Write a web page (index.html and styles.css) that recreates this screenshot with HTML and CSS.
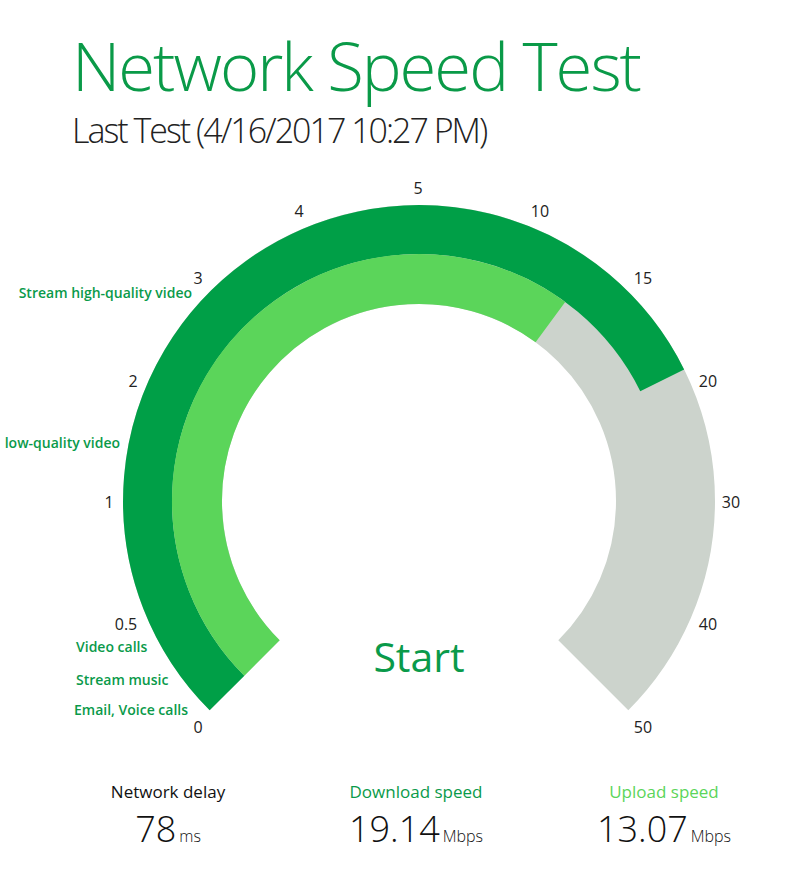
FILE: index.html
```html
<!DOCTYPE html>
<html lang="en">

<head>
    <meta charset="UTF-8">
    <meta name="viewport" content="width=device-width, initial-scale=1.0">
    <title>Network Speed Test</title>
    <link rel="stylesheet" href="styles.css">
</head>

<body>
    <div class="wrapper">
        <header>
            <h1 class="title">Network Speed Test</h1>
            <p class="last-test">Last Test (4/16/2017 10:27 PM)</p>
        </header>
        <main>
            <section class="gauge">
                <svg class="gauge-svg" width="800" height="590" viewBox="0 170 800 590">
                    <!-- rings: empty track, download (outer), upload (inner) -->
                    <path class="ring-track" d="M244.7 675.3 A246.5 246.5 0 1 1 593.3 675.3" />
                    <path class="ring-download" d="M227.0 693.0 A271.5 271.5 0 1 1 662.2 380.3" />
                    <path class="ring-upload" d="M262.0 658.0 A222 222 0 0 1 550.4 322.1" />

                    <g class="ticks">
                        <text x="198" y="727">0</text>
                        <text x="126" y="624">0.5</text>
                        <text x="109" y="502">1</text>
                        <text x="133" y="381">2</text>
                        <text x="198" y="278">3</text>
                        <text x="299" y="211">4</text>
                        <text x="418" y="188">5</text>
                        <text x="540" y="211">10</text>
                        <text x="643" y="278">15</text>
                        <text x="708" y="381">20</text>
                        <text x="731" y="502">30</text>
                        <text x="708" y="624">40</text>
                        <text x="643" y="727">50</text>
                    </g>

                    <g class="uses">
                        <text class="end" x="192" y="292">Stream high-quality video</text>
                        <text class="end" x="120" y="442">low-quality video</text>
                        <text x="76" y="646">Video calls</text>
                        <text x="76" y="679">Stream music</text>
                        <text x="74" y="709">Email, Voice calls</text>
                    </g>
                </svg>
                <button class="start-btn" type="button">Start</button>
            </section>

            <footer class="stats">
                <div class="stat">
                    <div class="stat-label">Network delay</div>
                    <div class="stat-value">78<span class="unit">ms</span></div>
                </div>
                <div class="stat">
                    <div class="stat-label download">Download speed</div>
                    <div class="stat-value">19.14<span class="unit">Mbps</span></div>
                </div>
                <div class="stat">
                    <div class="stat-label upload">Upload speed</div>
                    <div class="stat-value">13.07<span class="unit">Mbps</span></div>
                </div>
            </footer>
        </main>
    </div>
</body>

</html>
```

FILE: styles.css
```css
* {
    box-sizing: border-box;
}

body {
    margin: 0;
    background: #fff;
    font-family: "Open Sans", "Noto Sans", sans-serif;
    color: #111;
}

header {
    padding: 32px 0 0 72px;
}

.title {
    margin: 0;
    font-size: 67px;
    line-height: 67px;
    font-weight: 300;
    letter-spacing: -2px;
    color: #0a9a48;
}

.last-test {
    margin: 14px 0 0;
    font-size: 34px;
    line-height: 34px;
    font-weight: 300;
    letter-spacing: -2px;
    color: #222;
}

.gauge {
    position: relative;
    margin-top: 23px;
    height: 590px;
}

.gauge-svg {
    display: block;
}

.ring-track {
    fill: none;
    stroke: #ccd3cc;
    stroke-width: 99;
}

.ring-download {
    fill: none;
    stroke: #009f47;
    stroke-width: 49;
}

.ring-upload {
    fill: none;
    stroke: #5bd55a;
    stroke-width: 50;
}

.ticks text {
    font-size: 16px;
    fill: #222;
    text-anchor: middle;
    dominant-baseline: central;
}

.uses text {
    font-size: 14px;
    font-weight: 600;
    fill: #0a9a4a;
    dominant-baseline: central;
}

.uses text.end {
    text-anchor: end;
}

.start-btn {
    position: absolute;
    left: 419px;
    top: 466px;
    transform: translateX(-50%);
    margin: 0;
    padding: 0;
    border: 0;
    background: none;
    font-family: inherit;
    font-size: 41px;
    line-height: 41px;
    color: #0a9a4a;
    cursor: pointer;
}

.stats {
    display: flex;
    padding: 22px 0 0 44px;
}

.stat {
    width: 248px;
    text-align: center;
}

.stat-label {
    font-size: 17px;
    line-height: 20px;
    color: #111;
}

.stat-label.download {
    color: #0a9a4a;
}

.stat-label.upload {
    color: #5bd55a;
}

.stat-value {
    margin-top: 9px;
    font-size: 36px;
    line-height: 36px;
    font-weight: 300;
    color: #111;
}

.stat-value .unit {
    margin-left: 3px;
    font-size: 16px;
}
```
